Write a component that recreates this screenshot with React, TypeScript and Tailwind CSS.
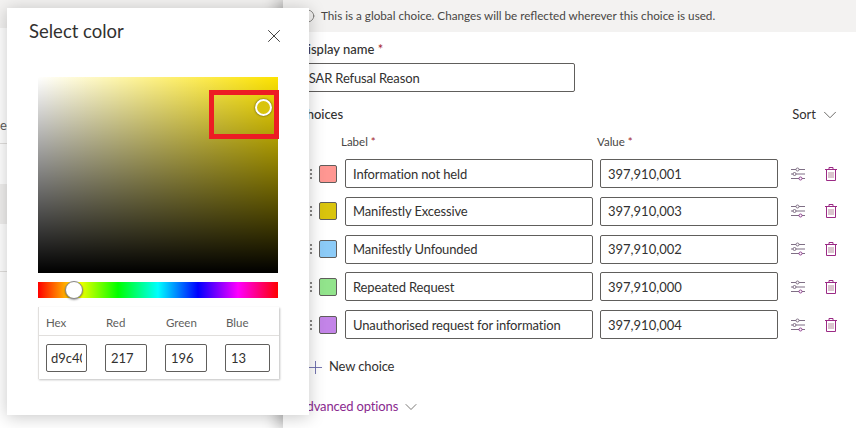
import { Plus, ChevronDown, X, Info } from 'lucide-react'

const choices = [
  { label: 'Information not held', value: '397,910,001', color: 'bg-[#ff9792]' },
  { label: 'Manifestly Excessive', value: '397,910,003', color: 'bg-[#d9c40d]' },
  { label: 'Manifestly Unfounded', value: '397,910,002', color: 'bg-[#8ccbf7]' },
  { label: 'Repeated Request', value: '397,910,000', color: 'bg-[#92e48c]' },
  { label: 'Unauthorised request for information', value: '397,910,004', color: 'bg-[#c384e8]' },
]

const rgbFields = [
  { name: 'Red', value: '217', width: 'w-[42px]' },
  { name: 'Green', value: '196', width: 'w-[42px]' },
  { name: 'Blue', value: '13', width: 'w-[45px]' },
]

function Required() {
  return <span className="font-normal text-[#a4262c]"> *</span>
}

function DragHandle() {
  return (
    <svg width="5" height="12" viewBox="0 0 5 12" fill="#605e5c">
      <circle cx="1" cy="2" r="1" />
      <circle cx="1" cy="6" r="1" />
      <circle cx="1" cy="10" r="1" />
      <circle cx="4" cy="2" r="1" />
      <circle cx="4" cy="6" r="1" />
      <circle cx="4" cy="10" r="1" />
    </svg>
  )
}

function SlidersIcon() {
  return (
    <svg width="14" height="14" viewBox="0 0 14 14" fill="none" stroke="#7f6f85" strokeWidth="1">
      <path d="M0 2.5h5M8 2.5h6M0 7h2M5 7h9M0 11.500h8M11 11.500h3" />
      <circle cx="6.500" cy="2.500" r="1.500" />
      <circle cx="3.500" cy="7" r="1.500" />
      <circle cx="9.500" cy="11.500" r="1.500" stroke="#8f3f90" />
    </svg>
  )
}

function TrashIcon() {
  return (
    <svg width="12" height="14" viewBox="0 0 12 14" fill="none" stroke="#9b2a85" strokeWidth="1">
      <path d="M0 2.500h12M1.500 2.500v11h9v-11M4 2.500v-2h4v2" />
      <path d="M4 5v6M6 5v6M8 5v6" stroke="#b58a9c" />
    </svg>
  )
}

function ChoiceRow({ label, value, color }: { label: string; value: string; color: string }) {
  return (
    <div className="flex items-center h-[29px]">
      <div className="w-[28px] flex justify-end pr-[7px]">
        <DragHandle />
      </div>
      <div className={`w-[18px] h-[18px] rounded-[2px] border border-[#605e5c] ${color}`} />
      <input
        readOnly
        value={label}
        className="ml-[8px] w-[248px] h-full rounded-[2px] border border-[#605e5c] px-[7px] text-[13px] tracking-[-0.14px] text-[#323130] outline-none"
      />
      <input
        readOnly
        value={value}
        className="ml-[7px] w-[178px] h-full rounded-[2px] border border-[#605e5c] px-[7px] text-[13px] text-[#323130] outline-none"
      />
      <div className="ml-[13px]">
        <SlidersIcon />
      </div>
      <div className="ml-[20px]">
        <TrashIcon />
      </div>
    </div>
  )
}

function ColorModal() {
  return (
    <div className="absolute left-[7px] top-[8px] z-20 w-[302px] h-[407px] bg-white shadow-[0_2px_16px_rgba(0,0,0,0.22)] pl-[31px]">
      <div className="flex items-center justify-between h-[46px] pt-[1px] pr-[29px] -ml-[9px]">
        <h2 className="text-[18.500px] font-normal text-[#323130]">Select color</h2>
        <X size={22} strokeWidth={1} className="text-[#323130] mt-[8px] -mr-[5px]" />
      </div>

      <div className="relative mt-[23px] w-[240px] h-[196px] bg-[#fde300]">
        <div className="absolute inset-0 bg-[linear-gradient(to_right,#fff,rgba(255,255,255,0))]" />
        <div className="absolute inset-0 bg-[linear-gradient(to_top,#000,rgba(0,0,0,0))]" />
        <div className="absolute left-[171px] top-[13px] w-[70px] h-[49px] border-[5px] border-[#ed1c24]" />
        <div className="absolute left-[217px] top-[22px] w-[17px] h-[17px] rounded-full border-2 border-white bg-[#d9c40d] shadow-[0_0_2px_rgba(0,0,0,0.7)]" />
      </div>

      <div className="relative mt-[9px] w-[240px] h-[16px] bg-[linear-gradient(to_right,#f00,#ff0,#0f0,#0ff,#00f,#f0f,#f00)]">
        <div className="absolute left-[27px] -top-[1px] w-[18px] h-[18px] rounded-full bg-white border border-[#8a8886] shadow-[0_1px_2px_rgba(0,0,0,0.4)]" />
      </div>

      <div className="mt-[9px] w-[241px] border-l border-[#e1dfdd] shadow-[1px_1px_2px_rgba(0,0,0,0.25)] text-[11.500px] text-[#605e5c]">
        <div className="flex items-center h-[29px] pl-[7px] pt-[3px] border-b border-[#e1dfdd]">
          <span className="w-[60px] shrink-0">Hex</span>
          {rgbFields.map((f) => (
            <span key={f.name} className="w-[60px] shrink-0">
              {f.name}
            </span>
          ))}
        </div>
        <div className="flex gap-[18px] h-[43px] pl-[7px] pt-[8px]">
          <input
            readOnly
            value="d9c40d"
            className="w-[41px] h-[28px] shrink-0 rounded-[2px] border border-[#605e5c] px-[4px] text-[13px] text-[#323130] outline-none"
          />
          {rgbFields.map((f) => (
            <input
              key={f.name}
              readOnly
              value={f.value}
              className={`${f.width} h-[28px] shrink-0 rounded-[2px] border border-[#605e5c] px-[5px] text-[13px] text-[#323130] outline-none`}
            />
          ))}
        </div>
      </div>
    </div>
  )
}

export default function App() {
  return (
    <div className="relative flex w-[856px] h-[428px] overflow-hidden bg-white font-['Lato',sans-serif] text-[#323130]">
      <div className="w-[283px] shrink-0 flex flex-col">
        <div className="h-[28px] bg-[#f3f2f1]" />
        <div className="h-[116px] border-b border-[#e1dfdd] flex items-end pb-[8px] text-[13px] text-[#605e5c]">
          <span>ed</span>
        </div>
        <div className="h-[40px]" />
        <div className="h-[40px] bg-[#f0efee]" />
        <div className="h-[48px] border-b border-[#e1dfdd]" />
      </div>

      <div className="relative z-10 flex-1 bg-white shadow-[-6px_0_14px_rgba(0,0,0,0.28)]">
        <div className="flex items-center h-[32px] bg-[#f3f2f1] pl-[18px] text-[11.700px] text-[#484644]">
          <Info size={14} strokeWidth={1} className="mr-[6px]" />
          <span>This is a global choice. Changes will be reflected wherever this choice is used.</span>
        </div>

        <div className="pl-[8px]">
          <div className="mt-[8px] h-[20px] pl-[7px] flex items-center text-[13px] font-medium">
            <span>
              Display name<Required />
            </span>
          </div>
          <input
            readOnly
            value="DSAR Refusal Reason"
            className="mt-[3px] block w-[284px] h-[29px] rounded-[2px] border border-[#605e5c] pl-[7px] text-[13px] tracking-[-0.14px] text-[#323130] outline-none"
          />

          <div className="mt-[13px] h-[20px] pl-[7px] pr-[15px] flex items-center justify-between text-[13px]">
            <span className="font-medium">Choices</span>
            <span className="flex items-center">
              Sort
              <ChevronDown size={22} strokeWidth={1} className="ml-[3px] text-[#605e5c]" />
            </span>
          </div>

          <div className="mt-[9px] h-[16px] flex items-center text-[11.500px] text-[#484644]">
            <span className="ml-[50px] w-[256px]">
              Label<Required />
            </span>
            <span>
              Value<Required />
            </span>
          </div>

          <div className="mt-[9px] flex flex-col gap-[8.75px]">
            {choices.map((c) => (
              <ChoiceRow key={c.value} {...c} />
            ))}
          </div>

          <div className="mt-[18px] h-[20px] pl-[14px] flex items-center text-[13px] tracking-[-0.14px]">
            <Plus size={21} strokeWidth={1} className="text-[#6264a7] mr-[3px]" />
            <span>New choice</span>
          </div>

          <div className="mt-[20px] h-[20px] pl-[7px] flex items-center text-[13px] tracking-[-0.14px] text-[#8a2a8f]">
            <span>Advanced options</span>
            <ChevronDown size={20} strokeWidth={1} className="ml-[3px] text-[#605e5c]" />
          </div>
        </div>
      </div>

      <ColorModal />
    </div>
  )
}
